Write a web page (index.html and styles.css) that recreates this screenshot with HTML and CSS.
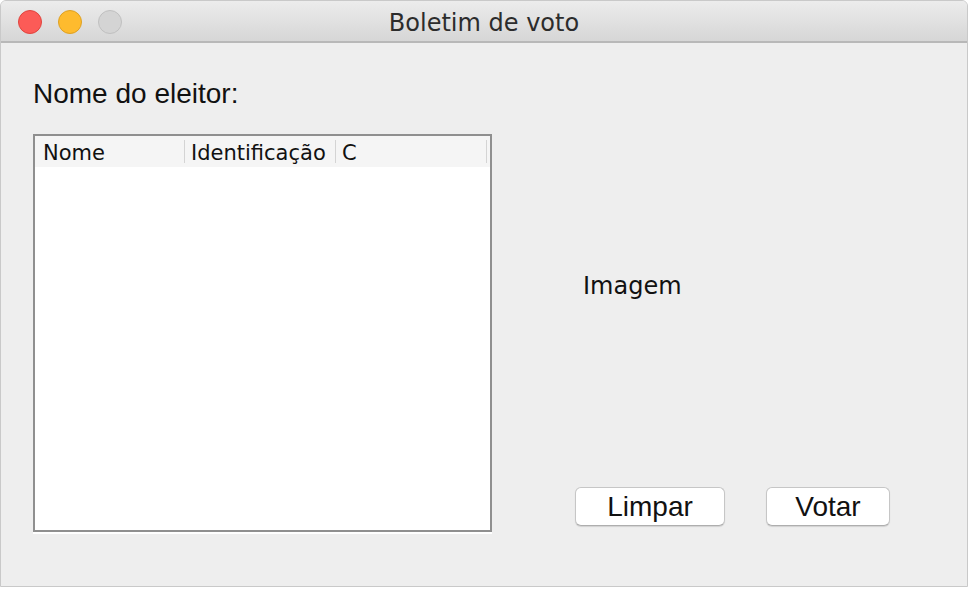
FILE: index.html
```html
<!DOCTYPE html>
<html>
<head>
<meta charset="utf-8">
<link rel="stylesheet" href="styles.css">
</head>
<body>
<div class="window">
  <div class="titlebar">
    <div class="lights">
      <span class="light red"></span>
      <span class="light yellow"></span>
      <span class="light gray"></span>
    </div>
    <div class="title">Boletim de voto</div>
  </div>
  <div class="content">
    <div class="left">
      <div class="label">Nome do eleitor:</div>
      <div class="table">
        <div class="thead">
          <div class="th">Nome</div>
          <div class="th">Identificação</div>
          <div class="th">C</div>
        </div>
      </div>
    </div>
    <div class="right">
      <div class="image-label">Imagem</div>
      <div class="buttons">
        <button class="btn btn-limpar">Limpar</button>
        <button class="btn btn-votar">Votar</button>
      </div>
    </div>
  </div>
</div>
</body>
</html>
```
FILE: styles.css
```css
html, body {
  margin: 0;
  padding: 0;
  background: #ffffff;
}
.window {
  width: 968px;
  height: 587px;
  box-sizing: border-box;
  border: 1px solid #c9c9c9;
  border-radius: 6px 6px 0 0;
  overflow: hidden;
  background: #eeeeee;
  display: flex;
  flex-direction: column;
}
.titlebar {
  height: 42px;
  flex: none;
  box-sizing: border-box;
  background: linear-gradient(#ececec, #d6d6d6);
  border-bottom: 2px solid #b8b8b8;
  display: flex;
  align-items: center;
  position: relative;
}
.lights {
  display: flex;
  gap: 16px;
  padding-left: 17px;
  padding-top: 2px;
}
.light {
  width: 22px;
  height: 22px;
  border-radius: 50%;
  border: 1px solid;
}
.red { background: #fc5b57; border-color: #e0443e; }
.yellow { background: #febb2e; border-color: #dea123; }
.gray { background: #d4d4d4; border-color: #c0c0c0; }
.title {
  position: absolute;
  left: 0;
  right: 0;
  top: 0;
  bottom: 0;
  display: flex;
  align-items: center;
  justify-content: center;
  font-family: "DejaVu Sans", sans-serif;
  font-size: 24px;
  color: #2c2c2c;
  padding-top: 4px;
  pointer-events: none;
}
.content {
  flex: 1;
  display: flex;
  padding: 35px 0 0 32px;
}
.left {
  display: flex;
  flex-direction: column;
  gap: 24px;
}
.label {
  font-family: "Liberation Sans", Arial, sans-serif;
  font-size: 28px;
  line-height: 32px;
  color: #111;
}
.table {
  width: 459px;
  height: 398px;
  box-sizing: border-box;
  border: 2px solid #8f8f8f;
  background: #ffffff;
  box-shadow: 0 2px 0 #ffffff;
}
.thead {
  height: 31px;
  background: #f5f5f5;
  display: flex;
  align-items: flex-start;
}
.th {
  width: 151px;
  height: 23px;
  margin-top: 4px;
  flex: none;
  box-sizing: border-box;
  border-right: 1px solid #d4d4d4;
  padding: 3px 0 0 6px;
  font-family: "DejaVu Sans", sans-serif;
  font-size: 21px;
  line-height: 20px;
  color: #111;
  white-space: nowrap;
}
.th:first-child { padding-left: 8px; width: 150px; }
.right {
  margin-left: 83px;
  display: flex;
  flex-direction: column;
}
.image-label {
  margin-top: 194px;
  padding-left: 8px;
  font-family: "DejaVu Sans", sans-serif;
  font-size: 24px;
  line-height: 28px;
  color: #111;
}
.buttons {
  margin-top: 187px;
  display: flex;
  gap: 41px;
}
.btn {
  height: 39px;
  box-sizing: border-box;
  background: #ffffff;
  border: 1px solid #c6c6c6;
  border-bottom-color: #aeaeae;
  border-radius: 6px;
  box-shadow: 0 1px 1px rgba(0,0,0,0.12);
  font-family: "Liberation Sans", Arial, sans-serif;
  font-size: 28px;
  line-height: 36px;
  color: #111;
  padding: 0;
}
.btn-limpar { width: 150px; }
.btn-votar { width: 124px; }
```
